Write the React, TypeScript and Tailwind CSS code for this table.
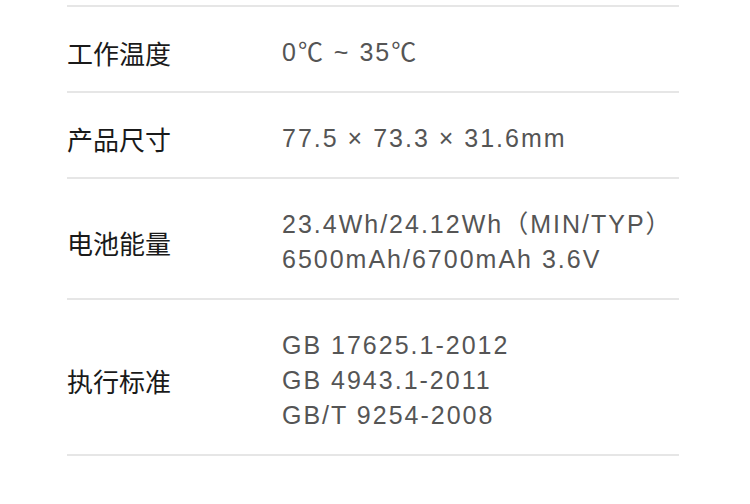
const specs = [
  { label: "工作温度", values: ["0℃ ~ 35℃"] },
  { label: "产品尺寸", values: ["77.5 × 73.3 × 31.6mm"] },
  {
    label: "电池能量",
    values: ["23.4Wh/24.12Wh（MIN/TYP）", "6500mAh/6700mAh 3.6V"],
  },
  {
    label: "执行标准",
    values: ["GB 17625.1-2012", "GB 4943.1-2011", "GB/T 9254-2008"],
  },
];

const App = () => {
  return (
    <div className="w-[750px] h-[504px] bg-white overflow-hidden">
      <div className="ml-[67px] w-[612px] pt-[5px]">
        {specs.map((spec, i) => (
          <div
            key={spec.label}
            className={
              "flex items-center border-t-2 border-[#e6e6e6] pt-[28px] pb-[21px]" +
              (i === specs.length - 1 ? " border-b-2" : "")
            }
          >
            <div className="w-[215px] shrink-0 text-[26px] leading-[35px] text-[#1a1a1a] font-['Noto_Sans_CJK_SC',sans-serif]">
              {spec.label}
            </div>
            <div className="flex flex-col text-[25px] leading-[35px] tracking-[2px] text-[#555555] font-['Liberation_Sans','Noto_Sans_CJK_SC',sans-serif]">
              {spec.values.map((v) => (
                <span key={v} className="whitespace-nowrap">
                  {v}
                </span>
              ))}
            </div>
          </div>
        ))}
      </div>
    </div>
  );
};

export default App;
